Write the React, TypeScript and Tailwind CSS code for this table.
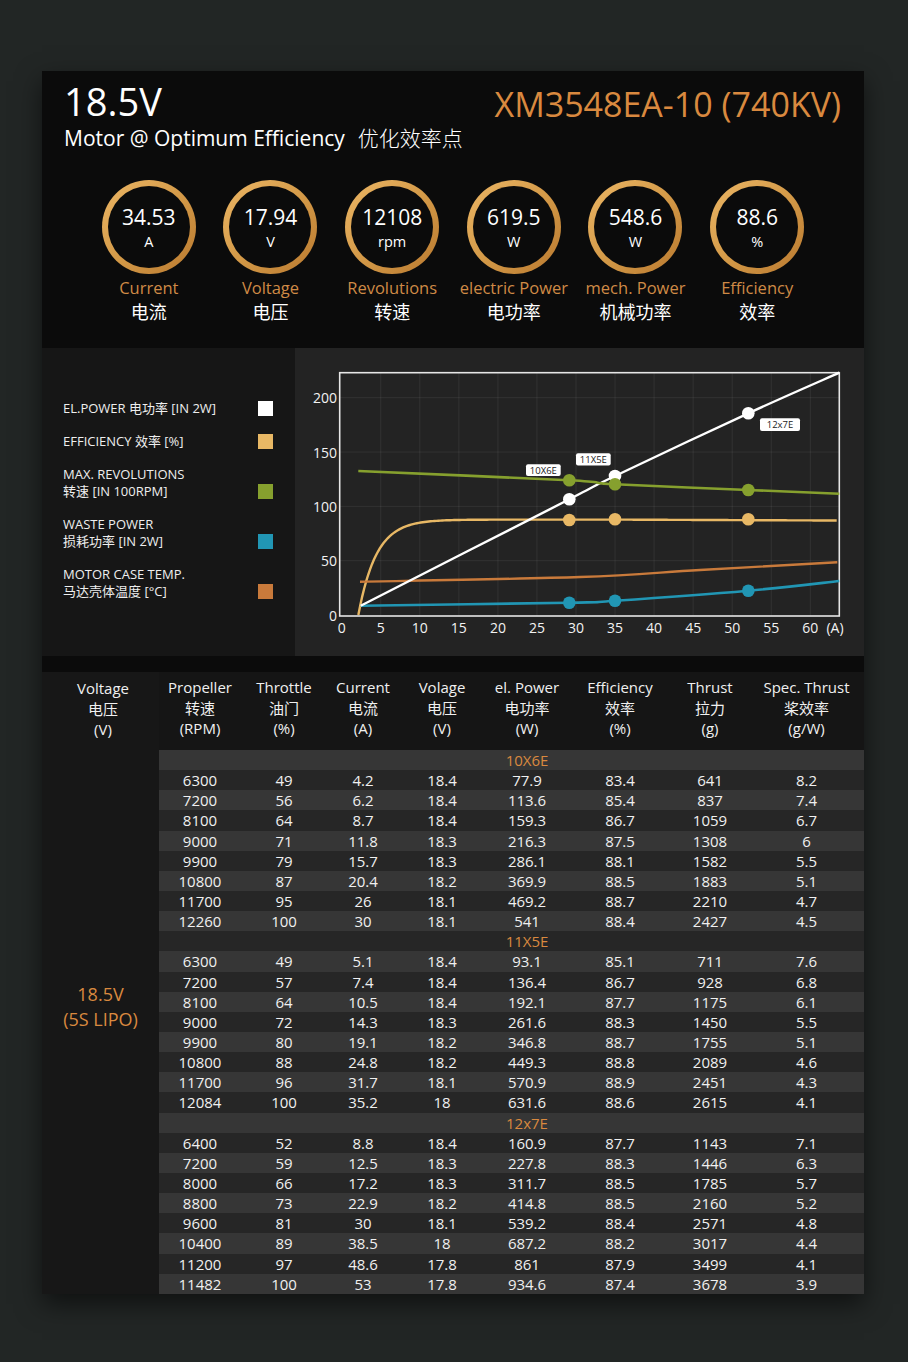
import React from "react";

const stats = [
  { v: "34.53", u: "A", en: "Current", zh: "电流" },
  { v: "17.94", u: "V", en: "Voltage", zh: "电压" },
  { v: "12108", u: "rpm", en: "Revolutions", zh: "转速" },
  { v: "619.5", u: "W", en: "electric Power", zh: "电功率" },
  { v: "548.6", u: "W", en: "mech. Power", zh: "机械功率" },
  { v: "88.6", u: "%", en: "Efficiency", zh: "效率" },
];

const legend = [
  { l1: "EL.POWER 电功率 [IN 2W]", l2: null, c: "#ffffff" },
  { l1: "EFFICIENCY 效率 [%]", l2: null, c: "#e8b865" },
  { l1: "MAX. REVOLUTIONS", l2: "转速 [IN 100RPM]", c: "#86a02e" },
  { l1: "WASTE POWER", l2: "损耗功率 [IN 2W]", c: "#2196b4" },
  { l1: "MOTOR CASE TEMP.", l2: "马达壳体温度 [°C]", c: "#c97a3b" },
];

const headers = [
  ["Propeller", "转速", "(RPM)"],
  ["Throttle", "油门", "(%)"],
  ["Current", "电流", "(A)"],
  ["Volage", "电压", "(V)"],
  ["el. Power", "电功率", "(W)"],
  ["Efficiency", "效率", "(%)"],
  ["Thrust", "拉力", "(g)"],
  ["Spec. Thrust", "桨效率", "(g/W)"],
];

const groups: { name: string; rows: string[][] }[] = [
  {
    name: "10X6E",
    rows: [
      ["6300", "49", "4.2", "18.4", "77.9", "83.4", "641", "8.2"],
      ["7200", "56", "6.2", "18.4", "113.6", "85.4", "837", "7.4"],
      ["8100", "64", "8.7", "18.4", "159.3", "86.7", "1059", "6.7"],
      ["9000", "71", "11.8", "18.3", "216.3", "87.5", "1308", "6"],
      ["9900", "79", "15.7", "18.3", "286.1", "88.1", "1582", "5.5"],
      ["10800", "87", "20.4", "18.2", "369.9", "88.5", "1883", "5.1"],
      ["11700", "95", "26", "18.1", "469.2", "88.7", "2210", "4.7"],
      ["12260", "100", "30", "18.1", "541", "88.4", "2427", "4.5"],
    ],
  },
  {
    name: "11X5E",
    rows: [
      ["6300", "49", "5.1", "18.4", "93.1", "85.1", "711", "7.6"],
      ["7200", "57", "7.4", "18.4", "136.4", "86.7", "928", "6.8"],
      ["8100", "64", "10.5", "18.4", "192.1", "87.7", "1175", "6.1"],
      ["9000", "72", "14.3", "18.3", "261.6", "88.3", "1450", "5.5"],
      ["9900", "80", "19.1", "18.2", "346.8", "88.7", "1755", "5.1"],
      ["10800", "88", "24.8", "18.2", "449.3", "88.8", "2089", "4.6"],
      ["11700", "96", "31.7", "18.1", "570.9", "88.9", "2451", "4.3"],
      ["12084", "100", "35.2", "18", "631.6", "88.6", "2615", "4.1"],
    ],
  },
  {
    name: "12x7E",
    rows: [
      ["6400", "52", "8.8", "18.4", "160.9", "87.7", "1143", "7.1"],
      ["7200", "59", "12.5", "18.3", "227.8", "88.3", "1446", "6.3"],
      ["8000", "66", "17.2", "18.3", "311.7", "88.5", "1785", "5.7"],
      ["8800", "73", "22.9", "18.2", "414.8", "88.5", "2160", "5.2"],
      ["9600", "81", "30", "18.1", "539.2", "88.4", "2571", "4.8"],
      ["10400", "89", "38.5", "18", "687.2", "88.2", "3017", "4.4"],
      ["11200", "97", "48.6", "17.8", "861", "87.9", "3499", "4.1"],
      ["11482", "100", "53", "17.8", "934.6", "87.4", "3678", "3.9"],
    ],
  },
];

const GRID = "grid grid-cols-[82px_86px_72px_86px_84px_102px_78px_115px]";

// chart helpers (svg coords: panel-local)
const X = (v: number) => 46.7 + 7.81 * v;
const Y = (v: number) => 267 - 1.0865 * v;

function smooth(pts: [number, number][]) {
  let d = `M${pts[0][0]},${pts[0][1]}`;
  for (let i = 0; i < pts.length - 1; i++) {
    const p0 = pts[i - 1] || pts[i];
    const p1 = pts[i];
    const p2 = pts[i + 1];
    const p3 = pts[i + 2] || p2;
    const c1x = p1[0] + (p2[0] - p0[0]) / 6;
    const c1y = p1[1] + (p2[1] - p0[1]) / 6;
    const c2x = p2[0] - (p3[0] - p1[0]) / 6;
    const c2y = p2[1] - (p3[1] - p1[1]) / 6;
    d += ` C${c1x.toFixed(2)},${c1y.toFixed(2)} ${c2x.toFixed(2)},${c2y.toFixed(2)} ${p2[0]},${p2[1]}`;
  }
  return d;
}

function effPath() {
  const pts: string[] = [];
  for (let x = 2.13; x <= 63.5; x += 0.25) {
    const y = 87.8 * (1 - Math.exp(-(x - 2.13) / 2.3)) - 0.03 * Math.max(0, x - 35);
    pts.push(`${X(x).toFixed(2)},${Y(y).toFixed(2)}`);
  }
  return "M" + pts.join(" L");
}

function Chart() {
  const white: [number, number][] = [
    [65.7, 257.7],
    [274.3, 151.3],
    [320, 128],
    [453.3, 65.3],
    [544.3, 24.7],
  ];
  const green: [number, number][] = [
    [63.3, 123],
    [274.3, 132.3],
    [320, 136.3],
    [453.3, 142],
    [544.3, 145.7],
  ];
  const orange: [number, number][] = [
    [65, 233.7],
    [285, 229],
    [405, 222],
    [542.3, 214.3],
  ];
  const blue: [number, number][] = [
    [65.7, 257.7],
    [274.3, 254.7],
    [320, 252.7],
    [453.3, 242.7],
    [544.3, 233],
  ];
  const dx = [274.3, 320, 453.3];
  const font = "'Open Sans', 'Noto Sans', sans-serif";
  return (
    <svg width="569" height="308" viewBox="0 0 569 308" className="block">
      {Array.from({ length: 12 }, (_, i) => (
        <line key={"v" + i} x1={X((i + 1) * 5)} x2={X((i + 1) * 5)} y1={24.7} y2={268} stroke="rgba(255,255,255,0.07)" strokeWidth="1" />
      ))}
      {[50, 100, 150, 200].map((v) => (
        <line key={"h" + v} x1={44.7} x2={544.3} y1={Y(v)} y2={Y(v)} stroke="rgba(255,255,255,0.07)" strokeWidth="1" />
      ))}
      <rect x="44.7" y="24.7" width="499.6" height="243.3" fill="none" stroke="#e6e6e6" strokeWidth="1.6" />
      {[0, 50, 100, 150, 200].map((v) => (
        <text key={"yl" + v} x="42" y={Y(v) + 5.5} textAnchor="end" fill="#f2f2f2" fontSize="14" fontFamily={font}>
          {v}
        </text>
      ))}
      {Array.from({ length: 13 }, (_, i) => (
        <text key={"xl" + i} x={X(i * 5)} y="285.3" textAnchor="middle" fill="#f2f2f2" fontSize="14" fontFamily={font}>
          {i * 5}
        </text>
      ))}
      <text x="540" y="285.3" textAnchor="middle" fill="#f2f2f2" fontSize="14" fontFamily={font}>
        (A)
      </text>
      <path d={effPath()} fill="none" stroke="#e8b865" strokeWidth="2.4" />
      <path d={smooth(orange)} fill="none" stroke="#c97a3b" strokeWidth="2.4" />
      <path d={smooth(blue)} fill="none" stroke="#2196b4" strokeWidth="2.6" />
      <path d={smooth(white)} fill="none" stroke="#ffffff" strokeWidth="2.4" />
      <path d={smooth(green)} fill="none" stroke="#86a02e" strokeWidth="2.6" />
      {dx.map((x, i) => (
        <circle key={"yd" + i} cx={x} cy={[172, 171.3, 171.3][i]} r="6.3" fill="#e8b865" />
      ))}
      {dx.map((x, i) => (
        <circle key={"bd" + i} cx={x} cy={[254.7, 252.7, 242.7][i]} r="6.3" fill="#2196b4" />
      ))}
      {dx.map((x, i) => (
        <circle key={"wd" + i} cx={x} cy={[151.3, 128, 65.3][i]} r="6.3" fill="#ffffff" />
      ))}
      {dx.map((x, i) => (
        <circle key={"gd" + i} cx={x} cy={[132.3, 136.3, 142][i]} r="6.3" fill="#86a02e" />
      ))}
      {[
        { x: 231, y: 116.3, w: 34.7, h: 11.6, t: "10X6E" },
        { x: 281, y: 105.3, w: 34.7, h: 12.2, t: "11X5E" },
        { x: 465, y: 70.3, w: 40, h: 12.7, t: "12x7E" },
      ].map((b) => (
        <g key={b.t}>
          <rect x={b.x} y={b.y} width={b.w} height={b.h} rx="2" fill="#ffffff" />
          <text x={b.x + b.w / 2} y={b.y + b.h / 2 + 3.4} textAnchor="middle" fill="#222" fontSize="9.5" fontFamily={font}>
            {b.t}
          </text>
        </g>
      ))}
    </svg>
  );
}

export default function App() {
  let rowIndex = 0;
  return (
    <div className="min-h-[1362px] w-[908px] bg-[#222625] pt-[71px] font-['Open_Sans','Noto_Sans_CJK_SC',sans-serif]">
      <div className="ml-[42px] w-[822px] bg-[#0b0b0b] shadow-[0_10px_24px_rgba(0,0,0,0.55)]">
        {/* Header */}
        <div className="h-[277px]">
          <div className="flex items-start justify-between pl-[22px] pr-[23px] pt-[11px]">
            <div>
              <div className="text-[38px] leading-[38px] text-white">18.5V</div>
              <div className="mt-[8px] flex text-[21px] leading-[21px] text-white">
                <span>Motor @ Optimum Efficiency</span>
                <span className="ml-[13px] font-light">优化效率点</span>
              </div>
            </div>
            <div className="mt-[5px] text-[34px] leading-[34px] text-[#d9893f]">XM3548EA-10 (740KV)</div>
          </div>
          <div className="ml-[46px] mt-[31px] grid w-[730px] grid-cols-6">
            {stats.map((s) => (
              <div key={s.en} className="flex flex-col items-center">
                <div className="h-[94px] w-[94px] rounded-full bg-linear-to-br from-[#ecb766] via-[#d49a48] to-[#b9792f] p-[6px]">
                  <div className="flex h-full w-full flex-col items-center justify-center rounded-full bg-[#0b0b0b] text-white">
                    <div className="text-[21px] leading-[29px]">{s.v}</div>
                    <div className="text-[14.5px] leading-[20px]">{s.u}</div>
                  </div>
                </div>
                <div className="mt-[1px] whitespace-nowrap text-[16.5px] leading-[25px] text-[#cf8a46]">{s.en}</div>
                <div className="text-[18px] leading-[25px] text-white">{s.zh}</div>
              </div>
            ))}
          </div>
        </div>

        {/* Middle: legend + chart */}
        <div className="flex h-[308px]">
          <div className="flex w-[253px] flex-col gap-[16px] bg-[#161616] pl-[21px] pr-[22px] pt-[52px]">
            {legend.map((it) => (
              <div key={it.l1} className="flex items-end justify-between">
                <div className="text-[13px] leading-[17px] text-[#eeeeee]">
                  <div>{it.l1}</div>
                  {it.l2 && <div>{it.l2}</div>}
                </div>
                <div className="mb-[1px] h-[15px] w-[15px]" style={{ backgroundColor: it.c }} />
              </div>
            ))}
          </div>
          <div className="w-[569px] bg-[#232323]">
            <Chart />
          </div>
        </div>

        {/* Table */}
        <div className="mt-[16px] flex bg-[#151515]">
          <div className="flex w-[117px] flex-col bg-[#171717]">
            <div className="h-[78px] pl-[5px] pt-[6px] text-center text-[15px] leading-[20.5px] text-[#f0f0f0]">
              <div>Voltage</div>
              <div>电压</div>
              <div>(V)</div>
            </div>
            <div className="mt-[232px] text-center text-[18px] leading-[25px] text-[#d9893f]">
              <div>18.5V</div>
              <div>(5S LIPO)</div>
            </div>
          </div>
          <div className="w-[705px]">
            <div className={`${GRID} h-[78px] pt-[5px] text-center text-[15px] leading-[20.5px] text-[#f0f0f0]`}>
              {headers.map((h) => (
                <div key={h[0]} className="whitespace-nowrap">
                  <div>{h[0]}</div>
                  <div>{h[1]}</div>
                  <div>{h[2]}</div>
                </div>
              ))}
            </div>
            {groups.map((g) => {
              const gi = rowIndex++;
              return (
                <div key={g.name}>
                  <div className={`${GRID} h-[20.15px] items-center text-center text-[15px] leading-[20px] ${gi % 2 === 0 ? "bg-[#363636]" : "bg-[#262626]"}`}>
                    <div />
                    <div />
                    <div />
                    <div />
                    <div className="text-[#d9893f]">{g.name}</div>
                  </div>
                  {g.rows.map((r) => {
                    const ri = rowIndex++;
                    return (
                      <div
                        key={g.name + r[0]}
                        className={`${GRID} h-[20.15px] items-center text-center text-[15px] leading-[20px] text-[#f0f0f0] ${ri % 2 === 0 ? "bg-[#363636]" : "bg-[#262626]"}`}
                      >
                        {r.map((c, ci) => (
                          <div key={ci}>{c}</div>
                        ))}
                      </div>
                    );
                  })}
                </div>
              );
            })}
          </div>
        </div>
      </div>
    </div>
  );
}
